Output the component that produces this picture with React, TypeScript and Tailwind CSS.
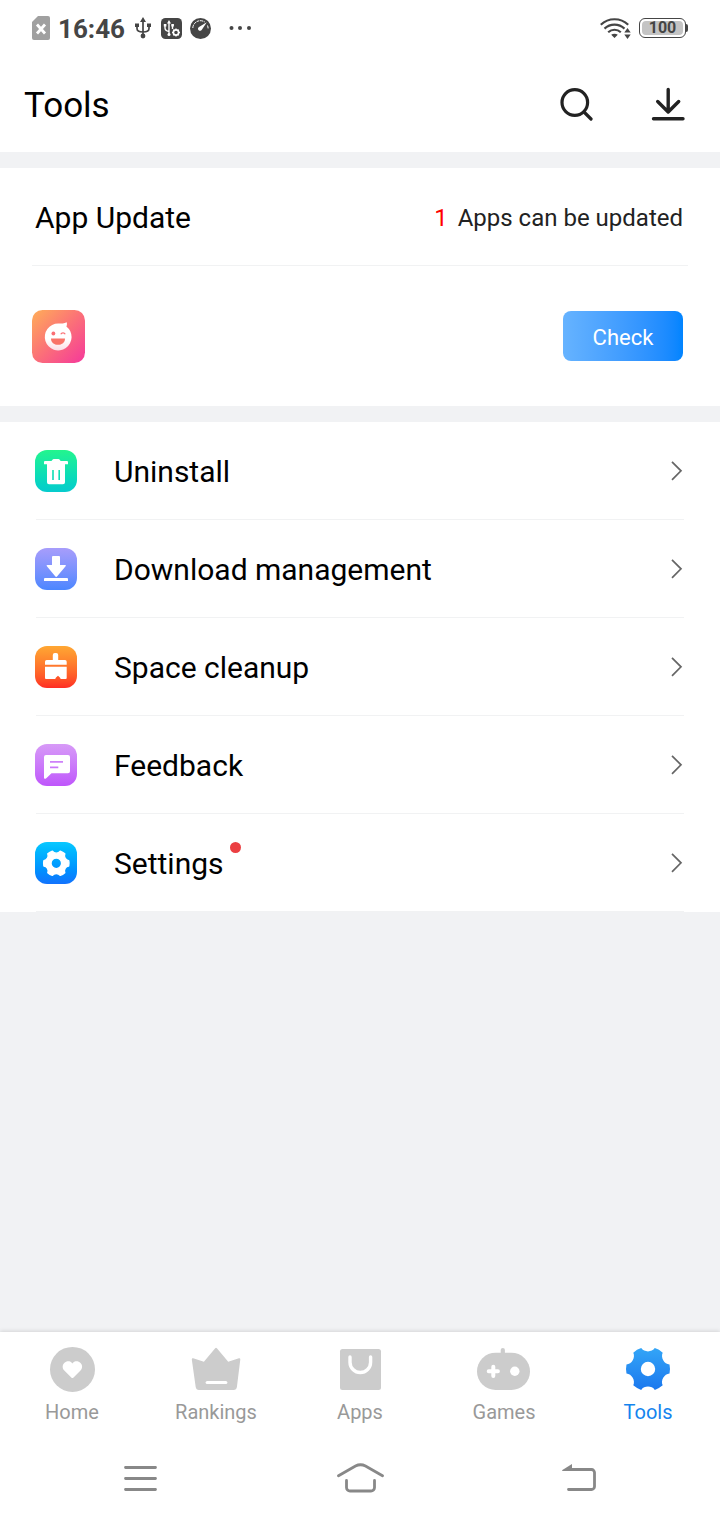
import type { ReactNode } from "react";

function gearPath(cx: number, cy: number, r: number, hole: number): string {
  const at = (deg: number, radius: number) => {
    const a = (deg * Math.PI) / 180;
    return `${(cx + radius * Math.cos(a)).toFixed(2)} ${(cy + radius * Math.sin(a)).toFixed(2)}`;
  };
  let d = `M${at(-12, r)}`;
  for (let k = 0; k < 6; k++) {
    const a = k * 60;
    d += `A${r} ${r} 0 0 1 ${at(a + 12, r)}`;
    d += `C${at(a + 17, r * 0.77)} ${at(a + 43, r * 0.77)} ${at(a + 48, r)}`;
  }
  d += `ZM${cx - hole} ${cy}a${hole} ${hole} 0 1 0 ${hole * 2} 0a${hole} ${hole} 0 1 0 ${-hole * 2} 0Z`;
  return d;
}

function StatusBar() {
  return (
    <div className="flex h-14 items-center justify-between px-8 text-[#454545]">
      <div className="flex items-center">
        <svg width="18" height="24" viewBox="0 0 18 24" aria-hidden="true">
          <path d="M6 0h10a2 2 0 0 1 2 2v20a2 2 0 0 1-2 2H2a2 2 0 0 1-2-2V6Z" fill="#a0a0a0" />
          <path d="M5 8.5l8 9M13 8.5l-8 9" stroke="#fff" strokeWidth="2.8" />
        </svg>
        <span className="ml-2 pt-0.5 text-[26px] leading-8 font-bold">16:46</span>
        <svg className="ml-2.5" width="16" height="22" viewBox="0 0 16 22" fill="none" stroke="currentColor" aria-hidden="true">
          <path d="M8 3v16M2 8v3.5c0 2.5 2 3.5 6 3.5s6-1 6-3.5V8" strokeWidth="1.7" />
          <path d="M8 0l3 5H5ZM0 6.5h4v3.500H0ZM12 6.500h4v3.500h-4Z" fill="currentColor" stroke="none" />
          <circle cx="8" cy="19" r="2.4" fill="currentColor" stroke="none" />
        </svg>
        <svg className="ml-2.5" width="21" height="21" viewBox="0 0 21 21" fill="none" aria-hidden="true">
          <rect width="21" height="21" rx="4.500" fill="currentColor" />
          <path d="M8 4v13M4 7v3c0 2.500 1.500 3 4 3.500M11.500 7v4" stroke="#fff" strokeWidth="1.400" />
          <path d="M8 2l2 3.500H6ZM2.800 6h2.600v2.400H2.800ZM10.300 6h2.600v2.400h-2.600Z" fill="#fff" />
          <circle cx="8" cy="16.500" r="1.500" fill="#fff" />
          <circle cx="15" cy="14.500" r="2.600" stroke="#fff" strokeWidth="1.600" />
          <path d="M15 10.500v1.500M15 17v1.500M11 14.500h1.500M17.500 14.500H19M12.200 11.700l1 1M16.800 16.300l1 1M17.800 11.700l-1 1M13.200 16.300l-1 1" stroke="#fff" strokeWidth="1.300" />
        </svg>
        <svg className="ml-2" width="21" height="21" viewBox="0 0 21 21" fill="none" aria-hidden="true">
          <circle cx="10.500" cy="10.500" r="10.500" fill="currentColor" />
          <path d="M2.800 10a7.700 7.700 0 0 1 12-6M17.500 7.500a7.500 7.500 0 0 1 .6 3" stroke="#fff" strokeWidth="1" strokeDasharray="3 .7" />
          <path d="M16.800 4.300L12 11.500a2.100 2.100 0 1 1-3-2.600Z" fill="#fff" />
        </svg>
        <svg className="ml-[18px]" width="24" height="6" viewBox="0 0 24 6" fill="currentColor" aria-hidden="true">
          <circle cx="2.500" cy="3" r="2" />
          <circle cx="11" cy="3" r="2" />
          <circle cx="20" cy="3" r="2" />
        </svg>
      </div>
      <div className="flex items-center gap-2">
        <svg width="31" height="21" viewBox="0 0 31 21" fill="none" stroke="currentColor" strokeWidth="2.200" aria-hidden="true">
          <path d="M.8 6.800C8.500-.6 20.500-.6 28.200 6.800M4.500 10.600c5.700-5.300 14.300-5.300 20 0M8.200 14.200c3.600-3.300 9-3.300 12.600 0" />
          <path d="M14.500 20l-3.300-3.200c1.900-1.500 4.700-1.500 6.600 0ZM27.500 10l3.200 4.500h-6.400ZM27.500 21l3.200-4.500h-6.400Z" fill="currentColor" stroke="none" />
        </svg>
        <div className="flex items-center">
          <div className="flex h-5 w-[47px] rounded-md border border-[#454545] p-0.5">
            <span className="flex flex-1 items-center justify-center rounded-sm bg-[#c4c4c4] text-base leading-none font-bold">100</span>
          </div>
          <span className="h-2 w-0.5 rounded-r-sm bg-[#454545]" />
        </div>
      </div>
    </div>
  );
}

function Header() {
  return (
    <header className="flex h-24 items-center justify-between pr-[35px] pl-6">
      <h1 className="pt-1 text-[35px] leading-10">Tools</h1>
      <div className="flex gap-[58px]">
        <button type="button" aria-label="Search">
          <svg width="34" height="34" viewBox="0 0 34 34" fill="none" stroke="#222" strokeWidth="3.2" strokeLinecap="round" aria-hidden="true">
            <circle cx="15.800" cy="15.500" r="12.800" />
            <path d="M25.500 25.500l6.500 6.500" />
          </svg>
        </button>
        <button type="button" aria-label="Downloads">
          <svg width="34" height="34" viewBox="0 0 34 34" fill="none" stroke="#222" strokeWidth="3.4" strokeLinecap="round" strokeLinejoin="round" aria-hidden="true">
            <path d="M17.200 2.500v22M6.700 14.500l10.500 10.500 10.500-10.500M2.500 31.800h29.500" />
          </svg>
        </button>
      </div>
    </header>
  );
}

function UpdateSection() {
  return (
    <section>
      <div className="mx-8 flex h-[98px] items-center justify-between border-b border-[#f1f2f3] pr-[5px] pl-[3px]">
        <h2 className="pt-0.5 text-[30px] leading-9">App Update</h2>
        <p className="flex gap-2.5 pt-0.5 text-2xl text-[#222]">
          <span className="text-[#ff0000]">1</span>
          <span>Apps can be updated</span>
        </p>
      </div>
      <div className="flex h-[140px] items-center justify-between pr-[37px] pl-8">
        <svg width="53" height="53" viewBox="0 0 53 53" fill="none" aria-label="App icon" role="img">
          <defs>
            <linearGradient id="smile" x1="0" y1="0" x2="1" y2="1">
              <stop offset="0" stopColor="#ffae58" />
              <stop offset=".5" stopColor="#fb7078" />
              <stop offset="1" stopColor="#f5389b" />
            </linearGradient>
            <linearGradient id="face" x1="0" y1="0" x2="0" y2="1">
              <stop offset=".6" stopColor="#fff" />
              <stop offset="1" stopColor="#fbdde5" />
            </linearGradient>
          </defs>
          <rect width="53" height="53" rx="10.500" fill="url(#smile)" />
          <path d="M26.200 13.600c3.200 0 6-.2 8.500-1.400.4 1.500.3 3-.3 4.200a13.400 13.400 0 1 1-8.200-2.800Z" fill="url(#face)" />
          <circle cx="21.400" cy="23.500" r="1.900" fill="#fa6f74" />
          <path d="M28.800 24.300c.7-1.800 3.700-1.800 4.400 0" stroke="#fa6f74" strokeWidth="1.200" />
          <path d="M19 28.500h14c0 4-3 6.300-7 6.300s-7-2.300-7-6.300Z" fill="#f97368" />
        </svg>
        <button type="button" className="h-[50px] w-[120px] rounded-lg bg-linear-to-r from-[#66b3ff] to-[#0084ff] pt-0.5 text-[22px] text-white">
          Check
        </button>
      </div>
    </section>
  );
}

type Row = { label: string; tile: string; glyph: ReactNode; dot?: boolean };

const rows: Row[] = [
  {
    label: "Uninstall",
    tile: "from-[#23f58d] to-[#06cbcd]",
    glyph: (
      <path
        fillRule="evenodd"
        d="M10 11h6.500l1.200-1.500q.4-.5 1-.5h4.800q.6 0 1 .5l1.200 1.500H32a1 1 0 0 1 1 1v2.300H30V32.300a2 2 0 0 1-2 2H14a2 2 0 0 1-2-2V14.300H9V12a1 1 0 0 1 1-1ZM17.200 20v10h1.600V20ZM23.400 20v10H25V20Z"
      />
    ),
  },
  {
    label: "Download management",
    tile: "from-[#a79dfb] to-[#4b86ff]",
    glyph: (
      <path d="M18 8h6a1 1 0 0 1 1 1v8h5q1.600 0 .6 1.200L22 28.500q-.8.900-1.600 0l-8.500-10.300q-1-1.200.6-1.200H17V9a1 1 0 0 1 1-1ZM10 30h22a1 1 0 0 1 1 1v2H9v-2a1 1 0 0 1 1-1Z" />
    ),
  },
  {
    label: "Space cleanup",
    tile: "from-[#ffa733] to-[#ff2b24]",
    glyph: (
      <path d="M17.800 14V9a2 2 0 0 1 2-2h1.400a2 2 0 0 1 2 2v5H30a1.700 1.700 0 0 1 1.700 1.700v3H10v-3a1.700 1.700 0 0 1 1.700-1.700ZM10 20.700h21.700V32a1 1 0 0 1-1 1h-5l-.8-1.500L23 29.700l-2 1.800-.8 1.500H11a1 1 0 0 1-1-1Z" />
    ),
  },
  {
    label: "Feedback",
    tile: "from-[#d79af7] to-[#bf55fb]",
    glyph: (
      <path
        fillRule="evenodd"
        d="M11 11h22a2 2 0 0 1 2 2v14.300a2 2 0 0 1-2 2H16.500L11 34.500q-2 1-2-.8V13a2 2 0 0 1 2-2ZM15 17v1.700h13V17ZM15 22.500v1.700h8.300v-1.700Z"
      />
    ),
  },
  {
    label: "Settings",
    tile: "from-[#0bc8ff] to-[#1272fd]",
    glyph: <path fillRule="evenodd" stroke="#fff" strokeWidth="1.400" strokeLinejoin="round" d={gearPath(21.3, 21.3, 12.7, 5.3)} />,
    dot: true,
  },
];

function ToolList() {
  return (
    <ul>
      {rows.map((row) => (
        <li key={row.label} className="px-9">
          <a href="#" className="flex h-[98px] items-center border-b border-[#f1f2f3]">
            <span className={`-ml-px size-[42px] rounded-xl bg-linear-to-b ${row.tile}`}>
              <svg width="42" height="42" viewBox="0 0 42 42" fill="#fff" aria-hidden="true">
                {row.glyph}
              </svg>
            </span>
            <span className="relative ml-[37px] pt-0.5 text-[30px] leading-9">
              {row.label}
              {row.dot && <span className="absolute -top-0.5 -right-[17px] size-[11px] rounded-full bg-[#eb3f42]" />}
            </span>
            <svg className="ml-auto" width="14" height="22" viewBox="0 0 14 22" fill="none" stroke="#666" strokeWidth="1.700" aria-hidden="true">
              <path d="M2 1.800l9 9-9 9" />
            </svg>
          </a>
        </li>
      ))}
    </ul>
  );
}

type Tab = { label: string; icon: ReactNode; active?: boolean };

const tabs: Tab[] = [
  {
    label: "Home",
    icon: (
      <>
        <circle cx="27.500" cy="23.400" r="22.500" />
        <path d="M27.400 17.400c1.500-2.100 4.200-2.500 6.300-1.600 3.800 1.700 4.500 6 1.800 8.800l-7 7q-1.100 1-2.200 0l-7-7c-2.700-2.800-2-7.100 1.800-8.800 2.100-.9 4.800-.5 6.300 1.600Z" fill="#fff" />
      </>
    ),
  },
  {
    label: "Rankings",
    icon: (
      <>
        <path d="M27.900 2.300l11.300 13.500 10.700-3.600q1.500-.3 1.400 1.200L47.900 41q-.5 3-3.200 3H9.900q-2.700 0-3.200-3L2.800 13.400q-.1-1.500 1.400-1.200l10.700 3.600L26.200 2.300q.8-.9 1.700 0Z" />
        <path d="M18.200 36.500h18.600" stroke="#fff" strokeWidth="3.200" strokeLinecap="round" />
      </>
    ),
  },
  {
    label: "Apps",
    icon: (
      <>
        <rect x="7" y="3" width="41" height="41" rx="2.500" />
        <path d="M17 11v5.200a10.300 10.300 0 0 0 20.600 0V11" fill="none" stroke="#fff" strokeWidth="3.400" strokeLinecap="round" />
      </>
    ),
  },
  {
    label: "Games",
    icon: (
      <>
        <path d="M23.700 4a2.100 2.100 0 0 1 4.200 0v4h-4.200Z" />
        <rect x="0" y="6.700" width="53" height="37.300" rx="18.600" />
        <path d="M16.300 20.700v9.200M11.700 25.300h9.200" stroke="#fff" strokeWidth="4" strokeLinecap="round" />
        <circle cx="37.800" cy="25.300" r="4.700" fill="#fff" />
      </>
    ),
  },
  {
    label: "Tools",
    active: true,
    icon: (
      <>
        <defs>
          <linearGradient id="gear" x1="0" y1="0" x2="0" y2="1">
            <stop offset="0" stopColor="#33a5f7" />
            <stop offset="1" stopColor="#1b78ee" />
          </linearGradient>
        </defs>
        <path d={gearPath(27, 23, 22, 7.2)} fill="url(#gear)" fillRule="evenodd" />
      </>
    ),
  },
];

function TabBar() {
  return (
    <nav className="grid h-[104px] grid-cols-5">
      {tabs.map((tab) => (
        <a
          key={tab.label}
          href="#"
          aria-current={tab.active ? "page" : undefined}
          className={`flex flex-col items-center gap-2 pt-3.5 text-xl leading-6 ${tab.active ? "text-[#1484ee]" : "text-[#999]"}`}
        >
          <svg width="54" height="46" viewBox="0 0 54 46" fill="#ccc" aria-hidden="true">
            {tab.icon}
          </svg>
          {tab.label}
        </a>
      ))}
    </nav>
  );
}

function SystemNav() {
  return (
    <div className="flex h-[84px] items-center justify-between px-[124px] text-[#888]">
      <button type="button" aria-label="Recent apps">
        <svg width="34" height="30" viewBox="0 0 34 30" fill="none" stroke="currentColor" strokeWidth="2.800" strokeLinecap="round" aria-hidden="true">
          <path d="M1.500 4.500h30M1.500 15.500h30M1.500 26.500h30" />
        </svg>
      </button>
      <button type="button" aria-label="Home screen">
        <svg width="48" height="32" viewBox="0 0 48 32" fill="none" stroke="currentColor" strokeWidth="2.800" strokeLinecap="round" aria-hidden="true">
          <path d="M2.500 13.800L19.500 4q5-2.500 10 0l17 9.800M10.500 18.500v7a3.500 3.500 0 0 0 3.500 3.500h21a3.500 3.500 0 0 0 3.500-3.500v-7" />
        </svg>
      </button>
      <button type="button" aria-label="Back">
        <svg width="34" height="30" viewBox="0 0 34 30" fill="none" stroke="currentColor" strokeWidth="2.800" strokeLinecap="round" aria-hidden="true">
          <path d="M6 6.500h23.500a3 3 0 0 1 3 3v14a3 3 0 0 1-3 3H6.500" />
          <path d="M0 7.200L10 1v6.900H.5Z" fill="currentColor" stroke="none" />
        </svg>
      </button>
    </div>
  );
}

export default function App() {
  return (
    <div className="flex min-h-screen flex-col bg-[#f1f2f4] font-[Roboto,sans-serif] text-black">
      <div className="bg-white">
        <StatusBar />
        <Header />
      </div>
      <main className="flex flex-1 flex-col gap-4 pt-4">
        <div className="bg-white">
          <UpdateSection />
        </div>
        <div className="bg-white">
          <ToolList />
        </div>
      </main>
      <footer className="bg-white shadow-[0_-1px_4px_rgba(0,0,0,0.12)]">
        <TabBar />
        <SystemNav />
      </footer>
    </div>
  );
}
